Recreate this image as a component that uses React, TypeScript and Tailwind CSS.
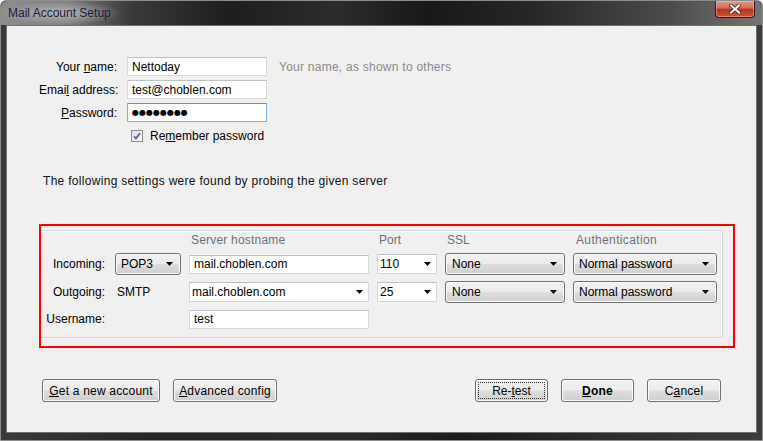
import React from 'react';

const btnBase =
  'border border-[#707070] rounded-[3px] bg-[linear-gradient(#f2f2f2_0%,#ebebeb_48%,#dddddd_52%,#cfcfcf_100%)] shadow-[inset_0_0_0_1px_#fbfbfb] text-black flex items-center';

function Arrow() {
  return (
    <svg width="7" height="4" viewBox="0 0 7 4" className="shrink-0">
      <path d="M0 0h7L3.5 4z" fill="#000" />
    </svg>
  );
}

function TextBox({ value, w, focus }: { value: React.ReactNode; w: string; focus?: boolean }) {
  return (
    <div
      className={`${w} h-[19px] bg-white border flex items-center pl-[4px] whitespace-nowrap ${
        focus ? 'border-[#7fb1e1] border-t-[#5b93c9]' : 'border-[#d5d9df] border-t-[#bcc0c7]'
      }`}
    >
      {value}
    </div>
  );
}

function Combo({ value, pl }: { value: string; pl: string }) {
  return (
    <div className={`h-[20px] w-full bg-white border border-[#d5d9df] border-t-[#bcc0c7] flex items-center justify-between ${pl} pr-[5px]`}>
      <span>{value}</span>
      <Arrow />
    </div>
  );
}

function DropBtn({ value, pl }: { value: string; pl: string }) {
  return (
    <div className={`${btnBase} h-[22px] w-full justify-between ${pl} pr-[7px]`}>
      <span>{value}</span>
      <Arrow />
    </div>
  );
}

function Button({ w, children, focus }: { w: string; children: React.ReactNode; focus?: boolean }) {
  if (focus) {
    return (
      <div className={`${btnBase} ${w} h-[23px] p-[2px] border-[#3c7fb1] shadow-[inset_0_0_0_1px_#a7d9f5]`}>
        <div className="flex-1 h-full border border-dotted border-[#333] flex items-center justify-center">{children}</div>
      </div>
    );
  }
  return <div className={`${btnBase} ${w} h-[23px] justify-center tracking-[0.2px]`}>{children}</div>;
}

export default function App() {
  return (
    <div className="w-[763px] h-[441px] flex flex-col rounded-t-[6px] border border-[#8c8c8c] bg-[linear-gradient(90deg,#3a3a3a_0%,#262626_20%,#2c2c2c_45%,#1c1c1c_60%,#2e2e2e_80%,#3c3c3c_100%)] font-['Liberation_Sans',Arial,sans-serif] text-[12px] text-black overflow-hidden">
      {/* Title bar */}
      <div className="h-[24px] flex items-start rounded-t-[6px] bg-[linear-gradient(90deg,#8e8e8e_0%,#7c7c7c_9%,#3a3a3a_17%,#1e1e1e_30%,#2c2c2c_44%,#181818_56%,#272727_70%,#4c4c4c_88%,#747474_100%)]">
        <div className="h-full flex items-center pl-[7px] pr-[10px] bg-[radial-gradient(closest-side,rgba(190,190,190,0.85),rgba(190,190,190,0))]">
          <span className="text-[#1b1b3c]">Mail Account Setup</span>
        </div>
        <div className="ml-auto mr-[7px] w-[40px] h-[17px] rounded-b-[4px] border border-t-0 border-[#3b1810] bg-[linear-gradient(#e39a88_0%,#d06a52_45%,#b8321a_52%,#cc5535_100%)] shadow-[inset_0_0_0_1px_rgba(255,200,180,0.45)] flex items-center justify-center">
          <svg width="12" height="10" viewBox="0 0 12 10">
            <path d="M2 1.5l8 7M10 1.5l-8 7" stroke="#3a2a28" strokeWidth="3.6" strokeLinecap="square" />
            <path d="M2 1.5l8 7M10 1.5l-8 7" stroke="#fff" strokeWidth="2" strokeLinecap="square" />
          </svg>
        </div>
      </div>

      {/* Client area */}
      <div className="flex-1 mx-[5px] mb-[7px] border border-[#6f6f6f] bg-[#f0f0f0] pl-[32px] pt-[31px] flex flex-col">
        {/* Account form */}
        <div className="flex flex-col gap-[4px]">
          <div className="flex items-center h-[19px] whitespace-nowrap">
            <div className="w-[78px] shrink-0 text-right">
              Your <u>n</u>ame:
            </div>
            <div className="ml-[10px]">
              <TextBox w="w-[140px]" value="Nettoday" />
            </div>
            <div className="ml-[12px] text-[#8a8a8a] tracking-[0.25px]">Your name, as shown to others</div>
          </div>
          <div className="flex items-center h-[19px] whitespace-nowrap">
            <div className="w-[78px] shrink-0 text-right">
              Emai<u>l</u> address:
            </div>
            <div className="ml-[10px]">
              <TextBox w="w-[140px]" value="test@choblen.com" />
            </div>
          </div>
          <div className="flex items-center h-[19px] whitespace-nowrap">
            <div className="w-[78px] shrink-0 text-right">
              <u>P</u>assword:
            </div>
            <div className="ml-[10px]">
              <TextBox
                w="w-[140px]"
                focus
                value={<span className="font-['DejaVu_Sans',sans-serif] text-[8px]">●●●●●●●●</span>}
              />
            </div>
          </div>
          <div className="flex items-center h-[19px] pl-[92px] whitespace-nowrap">
            <div className="w-[12px] h-[12px] border border-[#8e8f8f] bg-[linear-gradient(135deg,#dcdcdc,#fbfbfb)] flex items-center justify-center">
              <svg width="8" height="8" viewBox="0 0 8 8">
                <path d="M1 4.2l2 2.3L7 1" stroke="#4a5c8f" strokeWidth="1.6" fill="none" />
              </svg>
            </div>
            <span className="ml-[7px]">
              Re<u>m</u>ember password
            </span>
          </div>
        </div>

        <div className="mt-[28px] ml-[4px] leading-[16px] text-[#111] tracking-[0.3px]">
          The following settings were found by probing the given server
        </div>

        {/* Server settings */}
        <div className="mt-[35px] w-[696px] h-[124px] border-2 border-[#ff0000]">
          <div className="mt-[4px] w-[682px] h-[108px] border border-l-0 border-[#d3dbe2] rounded-r-[3px] shadow-[inset_-1px_1px_0_#ffffff] pt-[3px]">
            <div className="grid grid-cols-[66px_66px_180px_60px_120px_144px] grid-rows-[13px_22px_22px_20px] gap-x-[8px] gap-y-[6px] items-center whitespace-nowrap">
              <div />
              <div />
              <div className="pl-[2px] leading-[13px] text-[#707070] tracking-[0.2px]">Server hostname</div>
              <div className="pl-[2px] leading-[13px] text-[#707070]">Port</div>
              <div className="pl-[2px] leading-[13px] text-[#707070]">SSL</div>
              <div className="pl-[3px] leading-[13px] text-[#707070] tracking-[0.35px]">Authentication</div>

              <div className="text-right pr-[2px]">Incoming:</div>
              <DropBtn value="POP3" pl="pl-[5px]" />
              <TextBox w="w-full pl-[2px]" value="mail.choblen.com" />
              <Combo value="110" pl="pl-[2px]" />
              <DropBtn value="None" pl="pl-[6px]" />
              <DropBtn value="Normal password" pl="pl-[5px]" />

              <div className="text-right pr-[2px]">Outgoing:</div>
              <div className="pl-[2px]">SMTP</div>
              <Combo value="mail.choblen.com" pl="pl-[2px]" />
              <Combo value="25" pl="pl-[2px]" />
              <DropBtn value="None" pl="pl-[6px]" />
              <DropBtn value="Normal password" pl="pl-[5px]" />

              <div className="text-right pr-[2px]">Username:</div>
              <div />
              <TextBox w="w-full pl-[3px]" value="test" />
            </div>
          </div>
        </div>

        {/* Buttons */}
        <div className="mt-[31px] ml-[3px] w-[679px] flex items-center">
          <div className="flex gap-[13px]">
            <Button w="w-[118px]">
              <span>
                <u>G</u>et a new account
              </span>
            </Button>
            <Button w="w-[104px]">
              <span>
                <u>A</u>dvanced config
              </span>
            </Button>
          </div>
          <div className="ml-auto flex gap-[13px]">
            <Button w="w-[73px]" focus>
              <span>
                Re-<u>t</u>est
              </span>
            </Button>
            <Button w="w-[73px]">
              <span className="font-bold">
                <u>D</u>one
              </span>
            </Button>
            <Button w="w-[74px]">
              <span>
                C<u>a</u>ncel
              </span>
            </Button>
          </div>
        </div>
      </div>
    </div>
  );
}
